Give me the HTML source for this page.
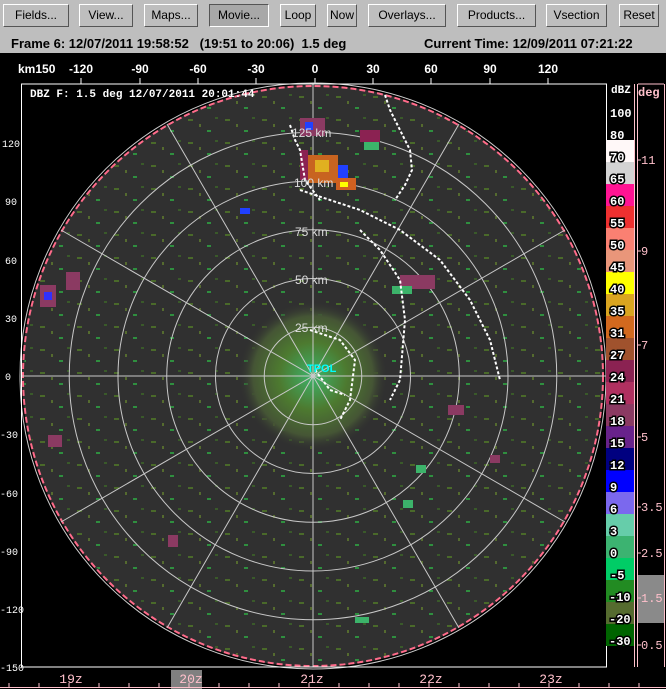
<!DOCTYPE html>
<html><head><meta charset="utf-8"><style>
body{margin:0;width:666px;height:689px;background:#000;overflow:hidden;font-family:"Liberation Sans",sans-serif}
#tb{position:absolute;left:0;top:0;width:666px;height:53px;background:#bebebe}
.b{position:absolute;top:4px;height:23px;border:1px solid #fff;border-right-color:#555;border-bottom-color:#555;background:#bebebe;font:12px "Liberation Sans",sans-serif;line-height:21px;text-align:center;color:#000;box-sizing:border-box;white-space:nowrap;overflow:hidden}
.info{position:absolute;top:36px;font:bold 13px "Liberation Sans",sans-serif;color:#000}
svg{position:absolute;left:0;top:0}
</style></head><body>
<div id="tb">
<div class="b" style="left:3px;width:66px">Fields...</div>
<div class="b" style="left:79px;width:54px">View...</div>
<div class="b" style="left:144px;width:54px">Maps...</div>
<div class="b" style="left:209px;width:60px;background:#a8a8a8;border-color:#555 #fff #fff #555">Movie...</div>
<div class="b" style="left:280px;width:36px">Loop</div>
<div class="b" style="left:327px;width:30px">Now</div>
<div class="b" style="left:368px;width:78px">Overlays...</div>
<div class="b" style="left:457px;width:79px">Products...</div>
<div class="b" style="left:546px;width:61px">Vsection</div>
<div class="b" style="left:619px;width:40px">Reset</div>
<div class="info" style="left:11px">Frame 6: 12/07/2011 19:58:52 &nbsp;&nbsp;(19:51 to 20:06) &nbsp;1.5 deg</div>
<div class="info" style="left:424px">Current Time: 12/09/2011 07:21:22</div>
</div>
<svg width="666" height="689" viewBox="0 0 666 689" style="top:0">
<defs>
<radialGradient id="cl" cx="313" cy="376" r="75" gradientUnits="userSpaceOnUse">
<stop offset="0" stop-color="#3cb36a"/><stop offset="0.45" stop-color="#4d7a30"/><stop offset="0.8" stop-color="#455535"/><stop offset="1" stop-color="#303030" stop-opacity="0"/></radialGradient>
<pattern id="sp" width="37" height="23" patternUnits="userSpaceOnUse">
<rect x="3" y="4" width="5" height="2" fill="#4a6a2a"/><rect x="22" y="15" width="4" height="2" fill="#2f8f3f"/><rect x="14" y="9" width="2" height="3" fill="#556b2f"/><rect x="30" y="2" width="3" height="2" fill="#3a5a2a"/>
</pattern>
<clipPath id="cc"><circle cx="313" cy="376" r="289"/></clipPath>
</defs>
<g font-family="Liberation Sans" font-size="12" font-weight="bold" fill="#fff" text-anchor="middle">
<text x="18" y="73" text-anchor="start">km150</text>
<text x="81" y="73">-120</text><text x="140" y="73">-90</text><text x="198" y="73">-60</text><text x="256" y="73">-30</text><text x="315" y="73">0</text><text x="373" y="73">30</text><text x="431" y="73">60</text><text x="490" y="73">90</text><text x="548" y="73">120</text>
</g>
<g stroke="#fff"><path d="M81 78V84M140 78V84M198 78V84M256 78V84M315 78V84M373 78V84M431 78V84M490 78V84M548 78V84"/></g>
<g font-family="Liberation Mono" font-size="10" fill="#fff">
<text x="2" y="147">120</text><text x="5" y="205">90</text><text x="5" y="264">60</text><text x="5" y="322">30</text><text x="5" y="380">0</text><text x="0" y="438">-30</text><text x="0" y="497">-60</text><text x="0" y="555">-90</text><text x="0" y="613">-120</text><text x="0" y="671">-150</text>
</g>
<circle cx="313" cy="376" r="291" fill="#303030"/>
<rect x="20" y="84" width="590" height="590" fill="url(#sp)" clip-path="url(#cc)"/>
<circle cx="313" cy="376" r="75" fill="url(#cl)"/>
<circle cx="313" cy="376" r="290" fill="none" stroke="#ff6b8a" stroke-width="2" stroke-dasharray="6 3"/>
<circle cx="313" cy="376" r="293" fill="none" stroke="#ccc" stroke-width="1"/>
<g fill="none" stroke="#c8c8c8" stroke-width="1">
<circle cx="313" cy="376" r="48.75"/><circle cx="313" cy="376" r="97.5"/><circle cx="313" cy="376" r="146.25"/><circle cx="313" cy="376" r="195"/><circle cx="313" cy="376" r="243.75"/>
<path d="M22 376H606M313 84V667M167 124L459 628M459 124L167 628M61 230L565 522M61 522L565 230"/>
</g>
<rect x="21.5" y="84" width="585" height="583" fill="none" stroke="#fff"/>
<g>
<rect x="308" y="155" width="30" height="28" fill="#c86420"/><rect x="315" y="160" width="14" height="12" fill="#e0b020"/>
<rect x="300" y="150" width="8" height="30" fill="#8b2252"/><rect x="338" y="165" width="10" height="15" fill="#2040ff"/>
<rect x="336" y="178" width="20" height="12" fill="#d06020"/><rect x="340" y="182" width="8" height="5" fill="#ff0"/>
<rect x="300" y="118" width="25" height="18" fill="#8b3a62"/><rect x="305" y="122" width="8" height="8" fill="#2040ff"/>
<rect x="360" y="130" width="20" height="12" fill="#8b2252"/><rect x="364" y="142" width="15" height="8" fill="#3cb36a"/>
<rect x="40" y="285" width="16" height="22" fill="#8b3a62"/><rect x="66" y="272" width="14" height="18" fill="#8b3a62"/><rect x="44" y="292" width="8" height="8" fill="#3030ff"/>
<rect x="400" y="275" width="35" height="14" fill="#8b3a62"/><rect x="392" y="286" width="20" height="8" fill="#3cb36a"/>
<rect x="48" y="435" width="14" height="12" fill="#8b3a62"/>
<rect x="448" y="405" width="16" height="10" fill="#8b3a62"/>
<rect x="168" y="535" width="10" height="12" fill="#8b3a62"/>
<rect x="240" y="208" width="10" height="6" fill="#2040ff"/>
<rect x="403" y="500" width="10" height="8" fill="#3cb36a"/>
<rect x="416" y="465" width="10" height="8" fill="#3cb36a"/>
<rect x="490" y="455" width="10" height="8" fill="#8b3a62"/>
<rect x="355" y="617" width="14" height="6" fill="#3cb36a"/>
</g>
<g fill="none" stroke="#fff" stroke-width="2" stroke-dasharray="3 2">
<path d="M290 125L295 140L300 150L305 180L320 200M385 95L390 110L400 130L410 150L412 170L405 185L395 200M300 190L330 200L360 210L400 230L440 260L470 300L490 340L500 380M310 330L340 340L355 360L350 400L340 420M315 370L330 390L345 395M360 230L380 250L400 280L405 320L400 380L390 400"/>
</g>
<g fill="#fff" font-family="Liberation Mono" font-size="11" font-weight="bold">
<text x="30" y="97">DBZ F: 1.5 deg 12/07/2011 20:01:44</text>
</g>
<g fill="#ddd" font-family="Liberation Sans" font-size="12"><text x="295" y="332">25 km</text><text x="295" y="284">50 km</text><text x="295" y="236">75 km</text><text x="294" y="187">100 km</text><text x="292" y="137">125 km</text></g>
<text x="307" y="372" fill="#00ffff" font-family="Liberation Sans" font-size="11" font-weight="bold">TPOL</text>
<g>
<rect x="606" y="140" width="28" height="22" fill="#fff8f8"/><rect x="606" y="162" width="28" height="22" fill="#d3d3d3"/><rect x="606" y="184" width="28" height="22" fill="#ff1493"/><rect x="606" y="206" width="28" height="22" fill="#ee3030"/><rect x="606" y="228" width="28" height="22" fill="#fa8072"/><rect x="606" y="250" width="28" height="22" fill="#e9967a"/><rect x="606" y="272" width="28" height="22" fill="#ffff00"/><rect x="606" y="294" width="28" height="22" fill="#daa520"/><rect x="606" y="316" width="28" height="22" fill="#d2691e"/><rect x="606" y="338" width="28" height="22" fill="#a0522d"/><rect x="606" y="360" width="28" height="22" fill="#8b2252"/><rect x="606" y="382" width="28" height="22" fill="#b03060"/><rect x="606" y="404" width="28" height="22" fill="#8b3a62"/><rect x="606" y="426" width="28" height="22" fill="#68228b"/><rect x="606" y="448" width="28" height="22" fill="#000080"/><rect x="606" y="470" width="28" height="22" fill="#0000ff"/><rect x="606" y="492" width="28" height="22" fill="#7b68ee"/><rect x="606" y="514" width="28" height="22" fill="#66cdaa"/><rect x="606" y="536" width="28" height="22" fill="#3cb371"/><rect x="606" y="558" width="28" height="22" fill="#00cd66"/><rect x="606" y="580" width="28" height="22" fill="#228b22"/><rect x="606" y="602" width="28" height="22" fill="#556b2f"/><rect x="606" y="624" width="28" height="22" fill="#006400"/>
</g>
<g font-family="Liberation Mono" font-size="12" font-weight="bold" fill="#fff">
<text x="611" y="93" font-size="11">dBZ</text><text x="610" y="117">100</text><text x="610" y="139">80</text>
<g style="paint-order:stroke" stroke="#000" stroke-width="3">
<text x="610" y="161">70</text><text x="610" y="183">65</text><text x="610" y="205">60</text><text x="610" y="227">55</text><text x="610" y="249">50</text><text x="610" y="271">45</text><text x="610" y="293">40</text><text x="610" y="315">35</text><text x="610" y="337">31</text><text x="610" y="359">27</text><text x="610" y="381">24</text><text x="610" y="403">21</text><text x="610" y="425">18</text><text x="610" y="447">15</text><text x="610" y="469">12</text><text x="610" y="491">9</text><text x="610" y="513">6</text><text x="610" y="535">3</text><text x="610" y="557">0</text><text x="610" y="579">-5</text><text x="609" y="601">-10</text><text x="609" y="623">-20</text><text x="609" y="645">-30</text>
</g></g>
<rect x="637" y="575" width="27" height="48" fill="#8a8a8a"/>
<g stroke="#ffc0cb" fill="none"><path d="M634.5 84V667M637.5 84V667M664.5 84V667M638 84H664"/>
<path d="M637 160h4M637 251h4M637 345h4M637 437h4M637 507h4M637 553h4M637 598h4M637 645h4"/></g>
<g font-family="Liberation Mono" font-size="12" fill="#ffc0cb">
<text x="638" y="96" font-weight="bold">deg</text>
<text x="641" y="164">11</text><text x="641" y="255">9</text><text x="641" y="349">7</text><text x="641" y="441">5</text><text x="641" y="511">3.5</text><text x="641" y="557">2.5</text><text x="641" y="602">1.5</text><text x="641" y="649">0.5</text>
</g>
<rect x="171" y="670" width="31" height="19" fill="#808080"/>
<g font-family="Liberation Mono" font-size="13" fill="#ffc0cb" text-anchor="middle">
<text x="71" y="683">19z</text><text x="191" y="683">20z</text><text x="312" y="683">21z</text><text x="431" y="683">22z</text><text x="551" y="683">23z</text>
</g>
<g stroke="#ffc0cb"><path d="M0 687.5H666M9 683V688M39 683V688M69 683V688M99 683V688M129 683V688M159 683V688M189 683V688M219 683V688M249 683V688M279 683V688M309 683V688M339 683V688M369 683V688M399 683V688M429 683V688M459 683V688M489 683V688M519 683V688M549 683V688M579 683V688M609 683V688M639 683V688"/></g>
</svg>
</body></html>
